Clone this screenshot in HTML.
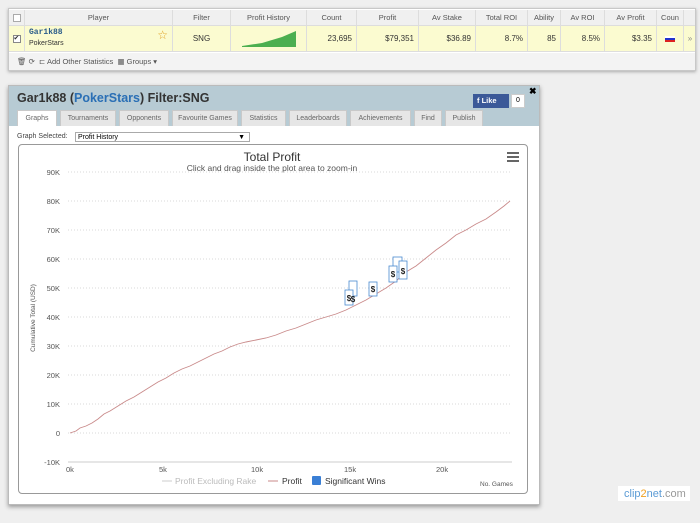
<!DOCTYPE html>
<html><head><style>
*{box-sizing:border-box;margin:0;padding:0}
body{width:700px;height:523px;background:#efefef;font-family:"Liberation Sans",sans-serif;position:relative;overflow:hidden}
.tbl{position:absolute;left:8px;top:8px;width:688px;height:63px;background:#fff;border:1px solid #c8c8c8;box-shadow:0 1px 3px #aaa}
.hdr{position:absolute;top:1px;left:0;right:0;height:16px;background:#f0f0f0;border-bottom:1px solid #ddd;font-size:7.5px;color:#555}
.row{position:absolute;top:17px;left:0;right:0;height:26px;background:#fbfbd0;font-size:8px;color:#333;border-bottom:1px solid #ddd}
.c{position:absolute;top:0;height:100%;border-right:1px solid #ddd;display:flex;align-items:center;justify-content:center}
.r{justify-content:flex-end;padding-right:4px}
.foot{position:absolute;top:44px;left:0;right:0;height:17px;background:#f3f3f3;font-size:7.5px;color:#555;padding:4px 8px}
.dlg{position:absolute;left:8px;top:85px;width:532px;height:420px;background:#fff;border:1px solid #bbb;box-shadow:0 2px 4px #999}
.dh{height:40px;background:#b7cbd4;position:relative}
.ttl{position:absolute;left:8px;top:5px;font-size:12.5px;font-weight:bold;color:#333}
.tab{position:absolute;top:24px;height:16px;background:#e6e6e6;border:1px solid #c9c9c9;border-bottom:none;font-size:7px;color:#666;text-align:center;line-height:15px}
</style></head><body>
<div class="tbl">
<div class="hdr">
<div class="c" style="left:0;width:16px"><span style="width:8px;height:8px;border:1px solid #aaa;background:#fff;display:block"></span></div>
<div class="c" style="left:16px;width:148px">Player</div>
<div class="c" style="left:164px;width:58px">Filter</div>
<div class="c" style="left:222px;width:76px">Profit History</div>
<div class="c" style="left:298px;width:50px">Count</div>
<div class="c" style="left:348px;width:62px">Profit</div>
<div class="c" style="left:410px;width:57px">Av Stake</div>
<div class="c" style="left:467px;width:52px">Total ROI</div>
<div class="c" style="left:519px;width:33px">Ability</div>
<div class="c" style="left:552px;width:44px">Av ROI</div>
<div class="c" style="left:596px;width:52px">Av Profit</div>
<div class="c" style="left:648px;width:27px">Coun</div>
</div>
<div class="row">
<div class="c" style="left:0;width:16px"><span style="width:8px;height:8px;border:1px solid #888;background:#fff;display:block;font-size:7px;line-height:6px">✔</span></div>
<div class="c" style="left:16px;width:148px;display:block;padding:2px 4px"><div style="color:#2a5c8a;font-weight:bold;font-family:'Liberation Mono',monospace">Gar1k88</div><div style="font-size:7px;margin-top:3px">PokerStars</div><span style="position:absolute;right:4px;top:2px;color:#e0a020;font-size:12px">☆</span></div>
<div class="c" style="left:164px;width:58px">SNG</div>
<div class="c" style="left:222px;width:76px"><svg width="54" height="16"><polygon points="0,15 20,12 40,6 54,0 54,16 0,16" fill="#4caf50"/></svg></div>
<div class="c r" style="left:298px;width:50px">23,695</div>
<div class="c r" style="left:348px;width:62px">$79,351</div>
<div class="c r" style="left:410px;width:57px">$36.89</div>
<div class="c r" style="left:467px;width:52px">8.7%</div>
<div class="c r" style="left:519px;width:33px">85</div>
<div class="c r" style="left:552px;width:44px">8.5%</div>
<div class="c r" style="left:596px;width:52px">$3.35</div>
<div class="c" style="left:648px;width:27px"><span style="width:10px;height:6px;background:linear-gradient(#fff 33%,#2233cc 33%,#2233cc 66%,#d22 66%);display:block"></span></div>
<div class="c" style="left:675px;width:12px;border:none;color:#888">»</div>
</div>
<div class="foot">🗑 ⟳ &nbsp;⊏ Add Other Statistics &nbsp;▦ Groups ▾</div>
</div>

<div class="dlg">
<div class="dh">
<div class="ttl">Gar1k88 (<span style="color:#2a6fb5">PokerStars</span>) Filter:SNG</div>
<div style="position:absolute;left:464px;top:8px;width:36px;height:14px;background:#3b5998;color:#fff;font-size:7.5px;font-weight:bold;line-height:14px;padding-left:4px">f Like</div>
<div style="position:absolute;left:502px;top:8px;width:14px;height:14px;background:#fff;border:1px solid #ccc;font-size:7px;text-align:center;line-height:12px">0</div>
<div style="position:absolute;left:520px;top:0;font-size:9px;font-weight:bold">✖</div>
<div class="tab" style="left:8px;width:40px;background:#fff">Graphs</div>
<div class="tab" style="left:51px;width:56px">Tournaments</div>
<div class="tab" style="left:110px;width:50px">Opponents</div>
<div class="tab" style="left:163px;width:66px">Favourite Games</div>
<div class="tab" style="left:232px;width:45px">Statistics</div>
<div class="tab" style="left:280px;width:58px">Leaderboards</div>
<div class="tab" style="left:341px;width:61px">Achievements</div>
<div class="tab" style="left:405px;width:28px">Find</div>
<div class="tab" style="left:436px;width:38px">Publish</div>
</div>
<div style="position:absolute;left:8px;top:47px;font-size:7px;color:#444">Graph Selected:</div>
<div style="position:absolute;left:66px;top:46px;width:175px;height:10px;border:1px solid #aaa;font-size:7px;padding-left:2px;line-height:9px">Profit History<span style="position:absolute;right:4px">▼</span></div>
<div style="position:absolute;left:9px;top:58px;width:510px;height:350px;border:1px solid #999;border-radius:4px"></div>
</div>

<div style="position:absolute;left:618px;top:486px;width:72px;height:15px;background:#fff"></div>

<svg style="position:absolute;left:0;top:0" width="700" height="523" font-family="Liberation Sans,sans-serif">
<text x="272" y="161" font-size="12" fill="#333" text-anchor="middle">Total Profit</text>
<text x="272" y="171" font-size="8.5" fill="#555" text-anchor="middle">Click and drag inside the plot area to zoom-in</text>
<g fill="#666"><rect x="507" y="152" width="12" height="2"/><rect x="507" y="156" width="12" height="2"/><rect x="507" y="160" width="12" height="2"/></g>
<g stroke="#ccc" stroke-dasharray="1,2" stroke-width="0.8">
<line x1="68" x2="512" y1="172" y2="172"/><line x1="68" x2="512" y1="201" y2="201"/><line x1="68" x2="512" y1="230" y2="230"/><line x1="68" x2="512" y1="259" y2="259"/><line x1="68" x2="512" y1="288" y2="288"/><line x1="68" x2="512" y1="317" y2="317"/><line x1="68" x2="512" y1="346" y2="346"/><line x1="68" x2="512" y1="375" y2="375"/><line x1="68" x2="512" y1="404" y2="404"/><line x1="68" x2="512" y1="433" y2="433"/>
</g>
<line x1="68" x2="512" y1="462" y2="462" stroke="#ccc"/>
<g font-size="7.5" fill="#555" text-anchor="end">
<text x="60" y="175">90K</text><text x="60" y="204">80K</text><text x="60" y="233">70K</text><text x="60" y="262">60K</text><text x="60" y="291">50K</text><text x="60" y="320">40K</text><text x="60" y="349">30K</text><text x="60" y="378">20K</text><text x="60" y="407">10K</text><text x="60" y="436">0</text><text x="60" y="465">-10K</text>
</g>
<g font-size="7.5" fill="#555"><text x="66" y="472">0k</text><text x="159" y="472">5k</text><text x="251" y="472">10k</text><text x="344" y="472">15k</text><text x="436" y="472">20k</text></g>
<text x="35" y="318" font-size="6.5" fill="#555" transform="rotate(-90 35 318)" text-anchor="middle">Cumulative Total (USD)</text>
<polyline fill="none" stroke="#c98a8a" stroke-width="0.9" points="70,433 76,431 80,428 86,426 92,423 98,419 104,414 110,411 118,406 126,401 134,397 142,392 150,387 158,382 166,378 174,373 182,369 190,366 198,362 206,358 214,354 222,351 230,347 238,344 246,342 256,340 266,338 276,335 286,331 296,328 306,324 316,320 326,317 336,314 346,310 356,305 366,300 376,294 386,288 396,281 406,272 416,266 426,258 436,250 446,243 456,235 466,230 476,224 486,219 496,212 504,206 510,201"/>
<g font-size="8" font-weight="bold" fill="#222" text-anchor="middle">
<g stroke="#4a8ad0" fill="#fff" stroke-width="0.8"><rect x="349" y="281" width="8" height="15"/><rect x="369" y="282" width="8" height="14"/><rect x="345" y="290" width="8" height="15"/><rect x="393" y="257" width="9" height="15"/><rect x="399" y="261" width="8" height="18"/><rect x="389" y="266" width="8" height="16"/></g>
<text x="353" y="302">$</text><text x="349" y="301">$</text><text x="373" y="292">$</text><text x="403" y="274">$</text><text x="393" y="277">$</text>
</g>
<g font-size="8.5"><line x1="162" x2="172" y1="481" y2="481" stroke="#ccc"/><text x="175" y="484" fill="#bbb">Profit Excluding Rake</text>
<line x1="268" x2="278" y1="481" y2="481" stroke="#c98a8a"/><text x="282" y="484" fill="#333">Profit</text>
<rect x="312" y="476" width="9" height="9" fill="#3a7fd5" rx="1"/><text x="325" y="484" fill="#333">Significant Wins</text></g>
<text x="480" y="486" font-size="6.5" fill="#555">No. Games</text>
<text x="624" y="497" font-size="11" fill="#5b9bd5">clip<tspan fill="#f0a020">2</tspan>net<tspan fill="#999">.com</tspan></text>
</svg>
</body></html>
